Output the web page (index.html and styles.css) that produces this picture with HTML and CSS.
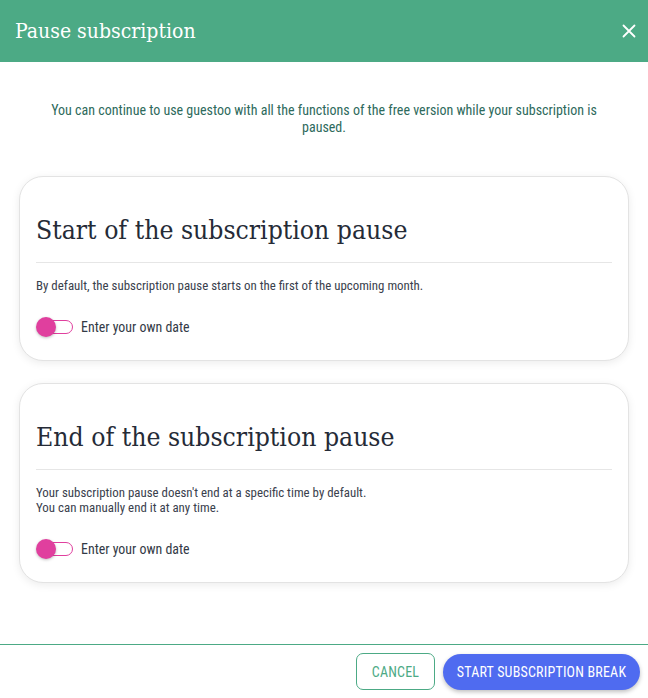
FILE: index.html
```html
<!DOCTYPE html>
<html lang="en">
<head>
<meta charset="utf-8">
<title>Pause subscription</title>
<link rel="stylesheet" href="styles.css">
</head>
<body>
<div class="dialog">
  <header class="dialog-header">
    <h1 class="dialog-title">Pause subscription</h1>
    <button class="close-btn" aria-label="Close">
      <svg width="14" height="14" viewBox="0 0 14 14"><path d="M1.5 1.5 L12.5 12.5 M12.5 1.5 L1.5 12.5" stroke="#fff" stroke-width="1.8" stroke-linecap="round"/></svg>
    </button>
  </header>
  <main class="dialog-body">
    <p class="intro">You can continue to use guestoo with all the functions of the free version while your subscription is paused.</p>
    <section class="card">
      <h2 class="card-title">Start of the subscription pause</h2>
      <hr class="divider">
      <p class="card-text">By default, the subscription pause starts on the first of the upcoming month.</p>
      <label class="toggle-row">
        <span class="toggle"><span class="toggle-track"></span><span class="toggle-knob"></span></span>
        <span class="toggle-label">Enter your own date</span>
      </label>
    </section>
    <section class="card">
      <h2 class="card-title">End of the subscription pause</h2>
      <hr class="divider">
      <p class="card-text">Your subscription pause doesn't end at a specific time by default.<br>You can manually end it at any time.</p>
      <label class="toggle-row">
        <span class="toggle"><span class="toggle-track"></span><span class="toggle-knob"></span></span>
        <span class="toggle-label">Enter your own date</span>
      </label>
    </section>
  </main>
  <footer class="dialog-footer">
    <button class="btn btn-outline">CANCEL</button>
    <button class="btn btn-primary">START SUBSCRIPTION BREAK</button>
  </footer>
</div>
</body>
</html>
```

FILE: styles.css
```css
* { box-sizing: border-box; }
html, body { margin: 0; padding: 0; background: #fff; }
body {
  font-family: "Roboto Condensed", "Liberation Sans Narrow", "DejaVu Sans Condensed", Roboto, sans-serif;
  font-stretch: condensed;
}
.dialog {
  display: flex;
  flex-direction: column;
  height: 698px;
}
.dialog-header {
  height: 62px;
  flex: none;
  background: #4caa85;
  display: flex;
  align-items: center;
  justify-content: space-between;
  padding: 0 12px 0 15px;
}
.dialog-title {
  margin: 0;
  font-family: "Roboto Slab", "DejaVu Serif Condensed", "DejaVu Serif", serif;
  font-weight: 300;
  font-size: 21px;
  color: #fff;
}
.close-btn {
  background: none;
  border: 0;
  padding: 0;
  width: 14px;
  height: 14px;
  display: flex;
}
.dialog-body {
  flex: 1;
  padding: 40px 19px 0 19px;
}
.intro {
  margin: 0 auto 40px;
  max-width: 570px;
  text-align: center;
  font-size: 14px;
  line-height: 17px;
  color: #2e6a5c;
}
.card {
  background: #fff;
  border: 1px solid #e3e3e3;
  border-radius: 24px;
  box-shadow: 0 2px 8px rgba(0,0,0,0.08);
  padding: 37px 16px 21px 16px;
  margin-bottom: 22px;
}
.card-title {
  margin: 0;
  font-family: "Roboto Slab", "DejaVu Serif Condensed", "DejaVu Serif", serif;
  font-weight: 400;
  font-size: 26.3px;
  line-height: 32px;
  color: #252b37;
}
.divider {
  margin: 16px 0 0;
  border: 0;
  border-top: 1px solid #e6e6e6;
}
.card-text {
  margin: 15px 0 0;
  font-size: 12.9px;
  line-height: 15px;
  color: #3a414d;
}
.toggle-row {
  display: flex;
  align-items: center;
  height: 24px;
  margin-top: 22px;
}
.toggle {
  position: relative;
  width: 38px;
  height: 24px;
  flex: none;
}
.toggle-track {
  position: absolute;
  left: 1px;
  top: 5px;
  width: 36px;
  height: 14px;
  border: 1px solid #e03f9e;
  border-radius: 7px;
  background: #fff;
}
.toggle-knob {
  position: absolute;
  left: 0;
  top: 2px;
  width: 20px;
  height: 20px;
  border-radius: 50%;
  background: #e03f9e;
  box-shadow: 0 1px 3px rgba(0,0,0,0.25);
}
.toggle-label {
  margin-left: 7px;
  font-size: 13.9px;
  color: #333a46;
}
.dialog-footer {
  flex: none;
  height: 54px;
  border-top: 1px solid #4caa85;
  display: flex;
  justify-content: flex-end;
  align-items: flex-start;
  gap: 8px;
  padding: 8px 8px 0 0;
}
.btn {
  font-family: "Roboto Condensed", "Liberation Sans Narrow", "DejaVu Sans Condensed", Roboto, sans-serif;
  font-stretch: condensed;
  font-size: 14px;
  letter-spacing: 0.2px;
  height: 37px;
  cursor: pointer;
}
.btn-outline {
  width: 79px;
  background: #fff;
  border: 1px solid #4caa85;
  border-radius: 7px;
  color: #4caa85;
}
.btn-primary {
  width: 197px;
  margin-top: 1px;
  height: 36px;
  background: #4f6bf0;
  border: 0;
  border-radius: 18px;
  color: #fff;
  box-shadow: 0 2px 4px rgba(0,0,0,0.25);
}
```
